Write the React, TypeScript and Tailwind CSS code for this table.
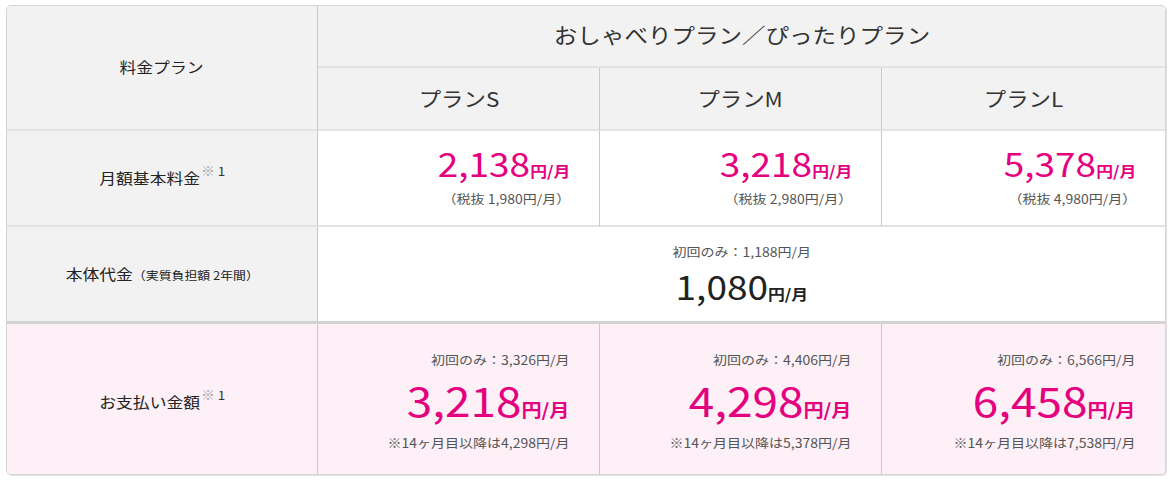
// 料金プラン比較表: ラベル列 + プランS/M/L の3列

const FONT = { fontFamily: '"Noto Sans CJK JP", "Noto Sans", sans-serif' }

type Plan = {
  name: string
  monthly: string
  taxFree: string
  first: string
  pay: string
  after: string
}

const plans: Plan[] = [
  { name: 'プランS', monthly: '2,138', taxFree: '1,980', first: '3,326', pay: '3,218', after: '4,298' },
  { name: 'プランM', monthly: '3,218', taxFree: '2,980', first: '4,406', pay: '4,298', after: '5,378' },
  { name: 'プランL', monthly: '5,378', taxFree: '4,980', first: '6,566', pay: '6,458', after: '7,538' },
]

function Note() {
  return (
    <sup className="relative -top-[8px] ml-[1px] text-[12px] font-normal text-[#333]">
      <span className="text-[#999]">※</span> 1
    </sup>
  )
}

export default function App() {
  return (
    <div className="min-h-screen bg-white pt-[5px] pl-[6px]" style={FONT}>
      <div className="grid h-[470px] w-[1160px] grid-cols-[311px_282px_282px_1fr] grid-rows-[62px_63px_96px_97px_1fr] overflow-hidden rounded-[5px] border border-[#d4d4d4] text-[#333] shadow-[1px_1px_1px_rgba(0,0,0,0.12)]">

        {/* ヘッダー */}
        <div className="row-span-2 flex items-center justify-center border-r border-b-2 border-r-[#c9c9c9] border-b-[#e3e3e3] bg-[#f2f2f2]">
          <span className="inline-block scale-x-[1.12] text-[15px] text-[#222]">料金プラン</span>
        </div>
        <div className="col-span-3 flex items-center justify-center border-b-2 border-[#e3e3e3] bg-[#f2f2f2] pb-[2px]">
          <span className="inline-block scale-x-[1.12] text-[21px]">おしゃべりプラン／ぴったりプラン</span>
        </div>
        {plans.map((p, i) => (
          <div
            key={p.name}
            className={`flex items-center justify-center border-b-2 border-b-[#e3e3e3] bg-[#f2f2f2] ${i < 2 ? 'border-r border-r-[#c9c9c9]' : ''}`}
          >
            <span className="inline-block scale-x-[1.12] text-[20px]">{p.name}</span>
          </div>
        ))}

        {/* 月額基本料金 */}
        <div className="flex items-center justify-center border-r border-b-2 border-r-[#c9c9c9] border-b-[#e3e3e3] bg-[#f2f2f2]">
          <span className="inline-block scale-x-[1.12] text-[15px] text-[#222]">月額基本料金<Note /></span>
        </div>
        {plans.map((p, i) => (
          <div
            key={p.name}
            className={`flex items-center justify-end border-b-2 border-b-[#e3e3e3] bg-white pr-[29px] ${i < 2 ? 'border-r border-r-[#c9c9c9]' : ''}`}
          >
            <div className="flex origin-right scale-x-[1.12] flex-col items-end">
              <div className="flex items-baseline text-[#e4007f]">
                <span className="text-[33px] leading-none">{p.monthly}</span>
                <span className="text-[15px] font-bold">円/月</span>
              </div>
              <div className="mt-[8px] text-[12.5px] text-[#555]">（税抜 {p.taxFree}円/月）</div>
            </div>
          </div>
        ))}

        {/* 本体代金 */}
        <div className="flex items-center justify-center border-r border-b-[3px] border-r-[#c9c9c9] border-b-[#d3d3d3] bg-[#f2f2f2]">
          <span className="inline-block scale-x-[1.12] text-[15px] text-[#222]">
            本体代金<span className="text-[11.5px]">（実質負担額 2年間）</span>
          </span>
        </div>
        <div className="col-span-3 flex items-center justify-center border-b-[3px] border-[#d3d3d3] bg-white">
          <div className="flex scale-x-[1.12] flex-col items-center">
            <div className="text-[12.5px] text-[#555]">初回のみ：1,188円/月</div>
            <div className="mt-[8px] flex items-baseline text-[#222]">
              <span className="text-[33px] leading-none">1,080</span>
              <span className="text-[15px] font-bold">円/月</span>
            </div>
          </div>
        </div>

        {/* お支払い金額 */}
        <div className="flex items-center justify-center border-r border-[#c9c9c9] bg-[#fdf0f6] pt-[6px]">
          <span className="inline-block scale-x-[1.12] text-[15px] text-[#222]">お支払い金額<Note /></span>
        </div>
        {plans.map((p, i) => (
          <div
            key={p.name}
            className={`flex items-center justify-end bg-[#fdf0f6] pr-[29px] ${i < 2 ? 'border-r border-[#c9c9c9]' : ''}`}
          >
            <div className="flex origin-right scale-x-[1.12] flex-col items-end pt-[6px]">
              <div className="text-[12.5px] text-[#555]">初回のみ：{p.first}円/月</div>
              <div className="mt-[9px] flex items-baseline text-[#e4007f]">
                <span className="text-[41px] leading-none">{p.pay}</span>
                <span className="text-[18px] font-bold">円/月</span>
              </div>
              <div className="mt-[11px] text-[12.5px] text-[#555]">※14ヶ月目以降は{p.after}円/月</div>
            </div>
          </div>
        ))}
      </div>
    </div>
  )
}
